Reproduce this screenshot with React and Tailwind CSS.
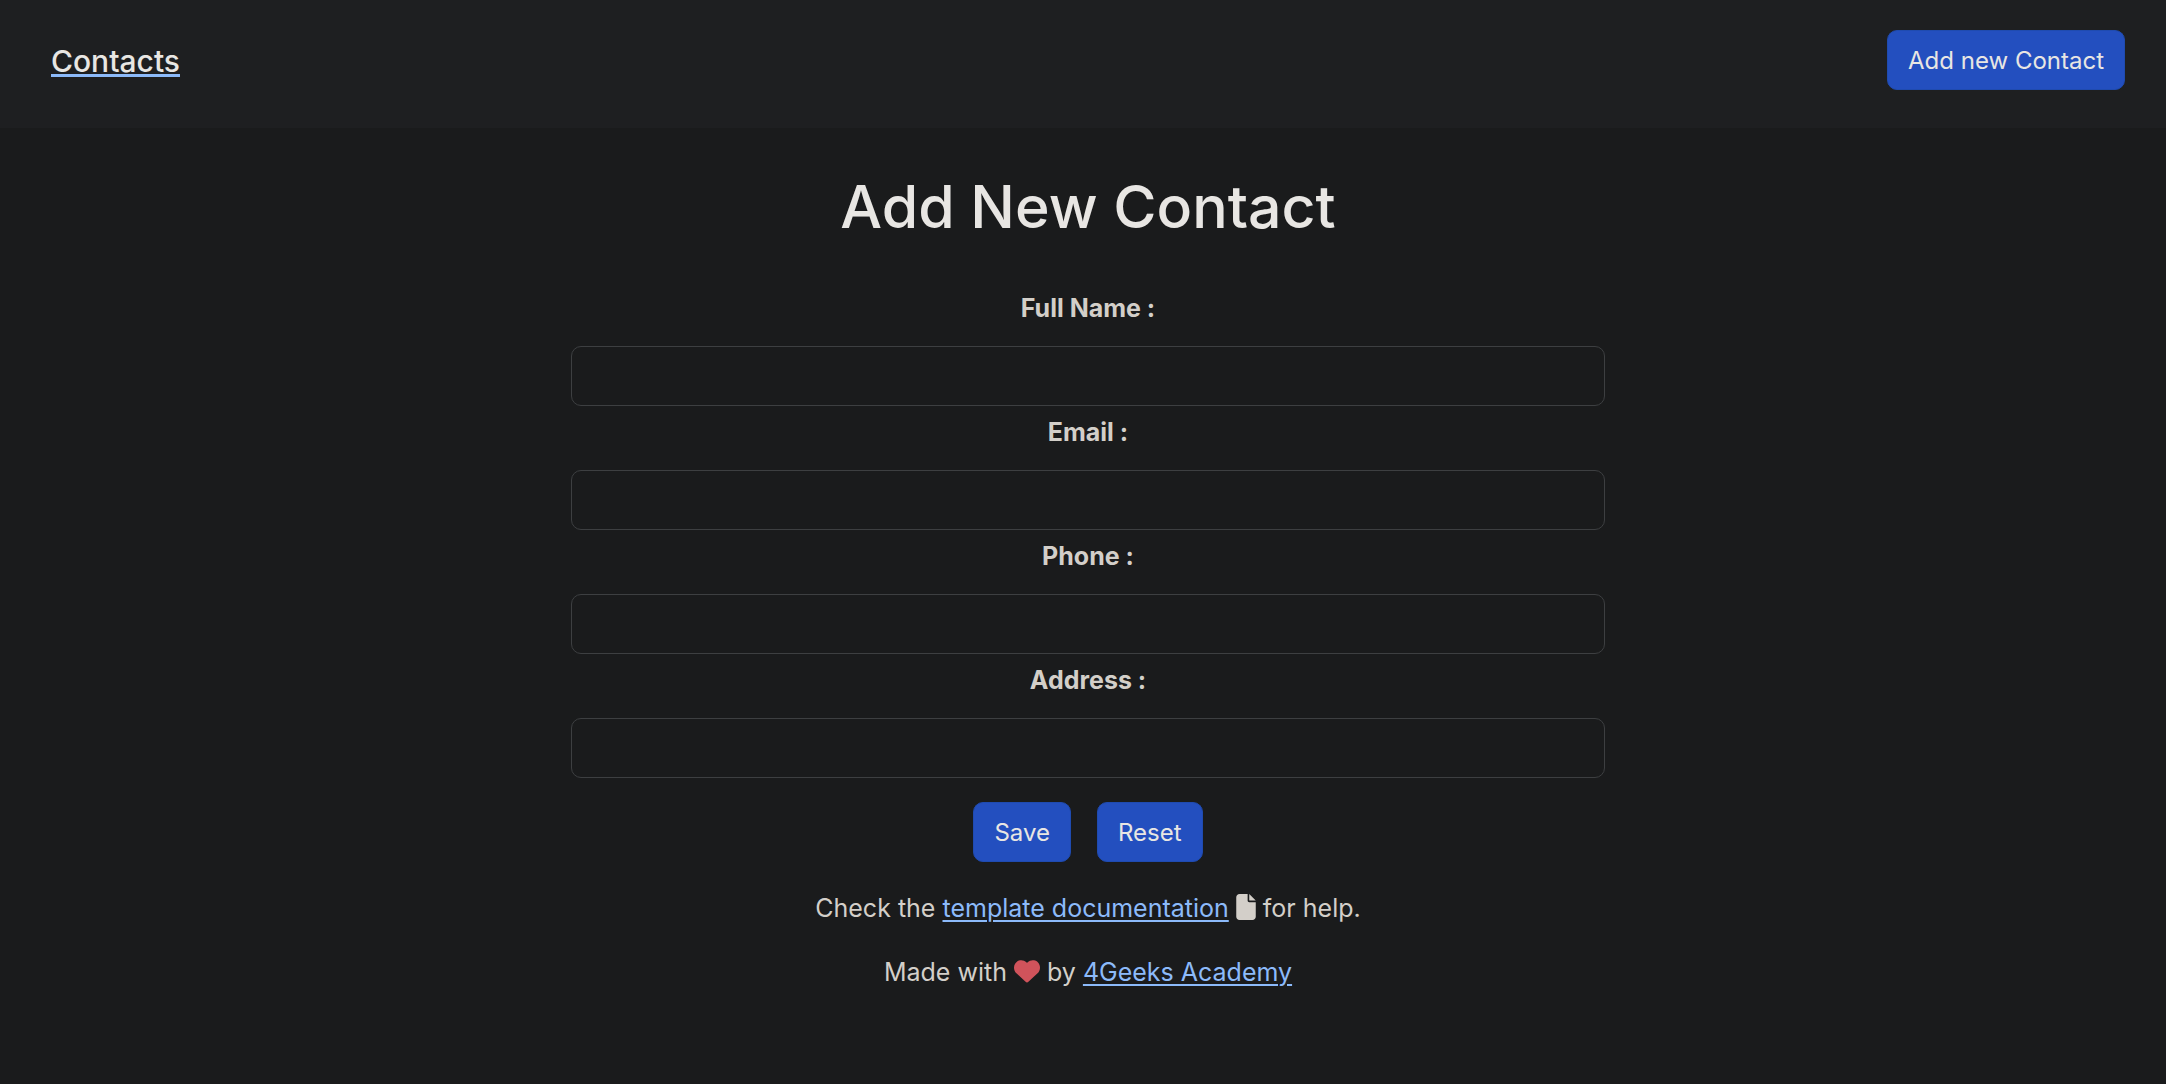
import { FaFile, FaHeart } from "react-icons/fa6";

const fields = [
  { id: "name", label: "Full Name :", type: "text" },
  { id: "email", label: "Email :", type: "email" },
  { id: "phone", label: "Phone :", type: "tel" },
  { id: "address", label: "Address :", type: "text" },
];

const button =
  "h-[60px] rounded-[10px] border border-[#1f4bb0] bg-[#234fbf] px-5 pt-px text-2xl text-[#e8e6e3]";
const link = "text-[#8cbafa] underline decoration-2 underline-offset-[3px]";

export default function App() {
  return (
    <div className="min-h-screen bg-[#1a1b1c] font-['Inter',sans-serif] text-[25px] leading-10 text-[#d3cfc9]">
      <nav className="flex items-start justify-between bg-[#1e1f21] pt-[30px] pr-[41px] pb-9 pl-[51px]">
        <a
          href="#contacts"
          className="text-[30px] font-medium leading-[62px] text-[#e8e6e3] underline decoration-[#8cbafa] decoration-[3px] underline-offset-2"
        >
          Contacts
        </a>
        <button type="button" className={button}>
          Add new Contact
        </button>
      </nav>

      <main className="flex flex-col items-center pt-10 pl-[10px] text-center">
        <h1 className="text-[59px] font-medium leading-[78px] text-[#e8e6e3]">Add New Contact</h1>
        <form className="mt-[42px] w-[48%]" onSubmit={(e) => e.preventDefault()}>
          {fields.map((f) => (
            <div key={f.id} className="mb-[6px]">
              <label htmlFor={f.id} className="mb-[18px] block font-bold">
                {f.label}
              </label>
              <input
                id={f.id}
                type={f.type}
                className="block h-[60px] w-full rounded-[10px] border border-[#3d3f41] bg-transparent px-5 outline-none"
              />
            </div>
          ))}
          <div className="mt-6 flex justify-center gap-[26px]">
            <button type="submit" className={button}>
              Save
            </button>
            <button type="reset" className={button}>
              Reset
            </button>
          </div>
        </form>
      </main>

      <footer className="mt-[26px] flex flex-col gap-6 pl-[10px] text-center">
        <p>
          Check the{" "}
          <a href="#docs" className={link}>
            template documentation
          </a>{" "}
          <FaFile className="inline h-[26px] w-5 align-[-3px]" /> for help.
        </p>
        <p>
          Made with <FaHeart className="inline size-[26px] align-[-3px] text-[#d0535b]" /> by{" "}
          <a href="#academy" className={link}>
            4Geeks Academy
          </a>
        </p>
      </footer>
    </div>
  );
}
